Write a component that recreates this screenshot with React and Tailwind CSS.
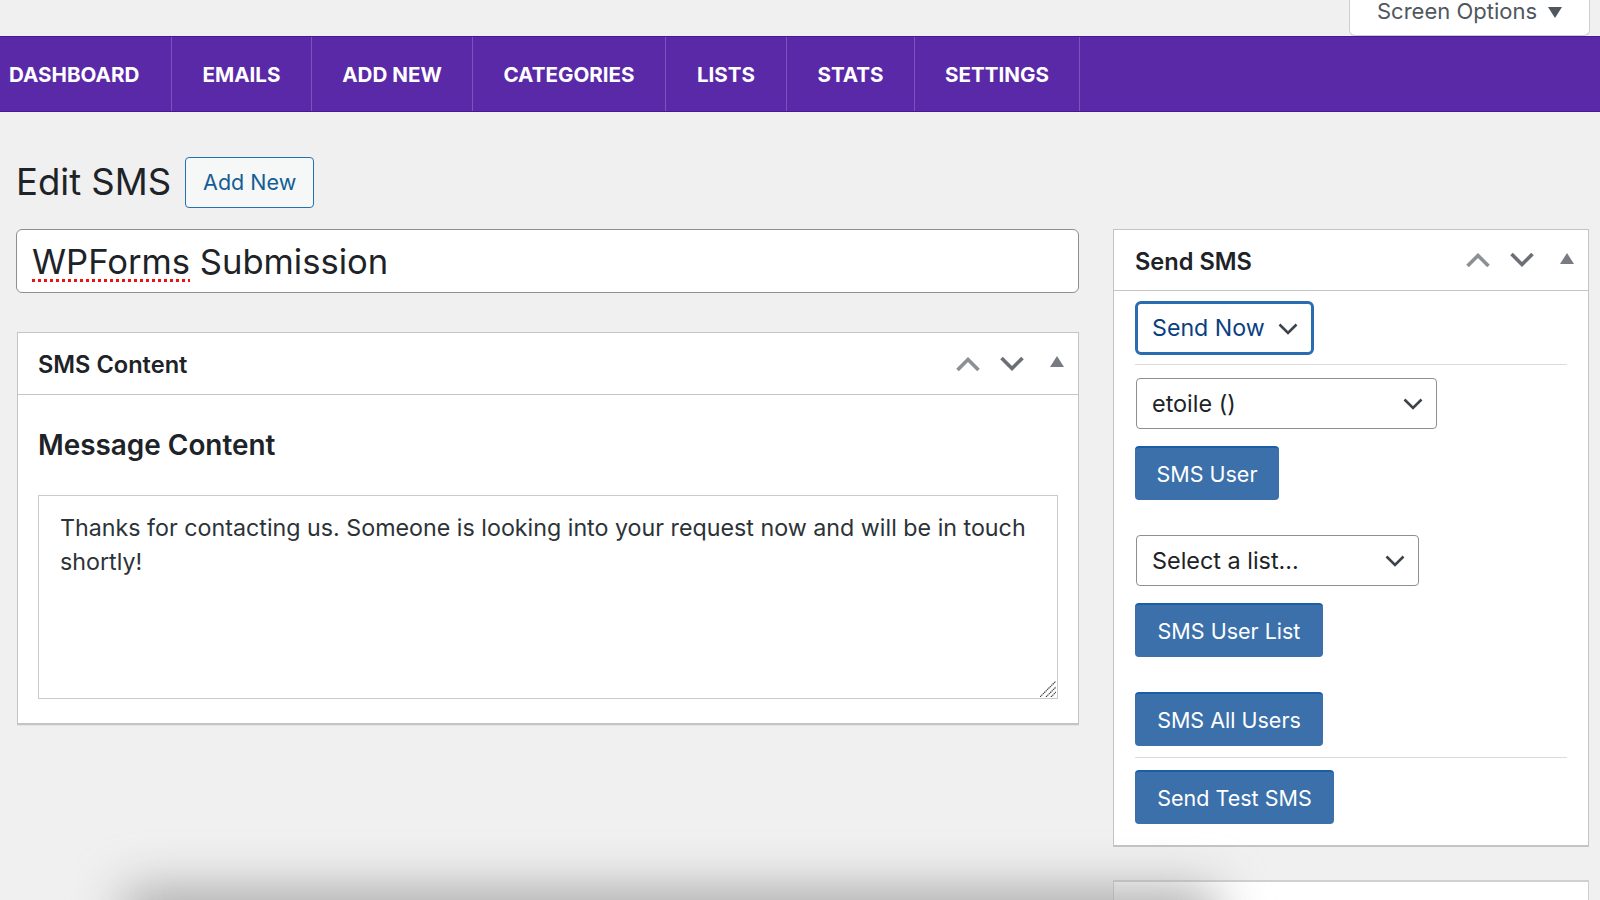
const font = { fontFamily: '"Inter", "Liberation Sans", sans-serif' };

const navItems = [
  ["DASHBOARD", "w-[172px] pl-[9px]"],
  ["EMAILS", "w-[140px] justify-center"],
  ["ADD NEW", "w-[161px] justify-center"],
  ["CATEGORIES", "w-[193px] justify-center"],
  ["LISTS", "w-[121px] justify-center"],
  ["STATS", "w-[128px] justify-center"],
  ["SETTINGS", "w-[165px] justify-center"],
];

function Chevron({ up = false, className = "" }) {
  return (
    <svg viewBox="0 0 24 14" className={className} fill="none" stroke="currentColor" strokeWidth="3.6">
      <path d={up ? "M1.5 13 12 2.5 22.5 13" : "M1.5 1 12 11.5 22.5 1"} />
    </svg>
  );
}

function Triangle({ className = "" }) {
  return (
    <svg viewBox="0 0 14 11" className={className} fill="currentColor">
      <path d="M7 0 14 11H0z" />
    </svg>
  );
}

function PanelControls() {
  return (
    <div className="flex items-center">
      <Chevron up className="w-[24px] h-[14px] text-[#8c8f94]" />
      <Chevron className="w-[24px] h-[14px] ml-[20px] text-[#6c7075]" />
      <Triangle className="w-[14px] h-[11px] ml-[26px] mb-[4px] text-[#787c82]" />
    </div>
  );
}

function SmallChevron() {
  return (
    <svg viewBox="0 0 20 12" className="w-[20px] h-[12px]" fill="none" stroke="#3c434a" strokeWidth="2.6">
      <path d="M1.5 1.5 10 10l8.5-8.5" />
    </svg>
  );
}

function BlueButton({ children, className = "" }) {
  return (
    <div className={`h-[54px] flex items-center justify-center whitespace-nowrap bg-[#3b70ab] border-t-2 border-[#1a5fa5] rounded-[4px] text-white text-[21.5px] ${className}`}>
      {children}
    </div>
  );
}

export default function App() {
  return (
    <div style={font} className="relative w-[1600px] h-[900px] overflow-hidden bg-[#f0f0f1] text-[#1d2327]">
      <div className="h-[36px] flex justify-end pr-[10px]">
        <div className="w-[241px] h-[36px] bg-white border border-t-0 border-[#cfcfd2] rounded-b-[6px] flex items-end pl-[27px] pb-[11px] text-[#50575e] text-[22px] leading-[26px]">
          <span>Screen Options</span>
          <Triangle className="w-[14px] h-[11px] rotate-180 ml-[11px] mb-[6px] text-[#50575e]" />
        </div>
      </div>

      <div className="h-[76px] flex bg-[#5a29a8] border-y border-[#47189c]">
        {navItems.map(([label, cls]) => (
          <div key={label} className={`h-full flex items-center pt-[2px] border-r border-[#7a53bb] text-white text-[20.6px] font-bold ${cls}`}>
            {label}
          </div>
        ))}
      </div>

      <div className="flex items-center pl-[16px] mt-[44px] h-[52px]">
        <h1 className="text-[36.5px] leading-none">Edit SMS</h1>
        <div className="ml-[14px] w-[129px] h-[51px] flex items-center justify-center bg-[#f6f7f7] border border-[#2271b1] rounded-[4px] text-[#135e96] text-[21.5px]">
          Add New
        </div>
      </div>

      <div className="flex mt-[21px] pl-[16px]">
        <div className="w-[1063px]">
          <div className="h-[64px] flex items-center pl-[15px] pt-[2px] bg-white border border-[#8c8f94] rounded-[6px] text-[34.6px]">
            <span><span className="underline decoration-dotted decoration-[#f01010] decoration-[3px] underline-offset-[5px]">WPForms</span> Submission</span>
          </div>

          <div className="mt-[39px] ml-px h-[393px] bg-white border border-[#c3c4c7] border-b-2 shadow-[0_1px_1px_rgba(0,0,0,0.04)]">
            <div className="h-[62px] flex items-center justify-between pl-[20px] pr-[14px] border-b border-[#c3c4c7]">
              <div className="pt-[2px] text-[23.6px] font-semibold">SMS Content</div>
              <PanelControls />
            </div>
            <div className="px-[20px] pt-[32px]">
              <h2 className="text-[27.9px] leading-[36px] font-semibold">Message Content</h2>
              <div className="relative mt-[32px] h-[204px] border border-[#c9cacc] px-[21px] pt-[15px] text-[23.25px] leading-[34px] text-[#2c3338]">
                Thanks for contacting us. Someone is looking into your request now and will be in touch shortly!
                <svg viewBox="0 0 16 16" className="absolute right-[1px] bottom-[1px] w-[16px] h-[16px]" stroke="#444" strokeWidth="1.2" strokeDasharray="1.4 0.6">
                  <path d="M0 16 16 0M6 16 16 6M11 16l5-5" />
                </svg>
              </div>
            </div>
          </div>
        </div>

        <div className="ml-[34px] w-[476px]">
          <div className="h-[618px] bg-white border border-[#c3c4c7] border-b-2">
            <div className="h-[61px] flex items-center justify-between pl-[21px] pr-[14px] border-b border-[#c3c4c7]">
              <div className="pt-[3px] text-[23.6px] font-semibold">Send SMS</div>
              <PanelControls />
            </div>
            <div className="px-[21px] pt-[10px]">
              <div className="w-[179px] h-[54px] flex items-center justify-between pl-[14px] pr-[13px] pt-px border-[3px] border-[#2a6cb0] rounded-[6px] text-[#0a3f80] text-[23.2px]">
                <span>Send Now</span>
                <SmallChevron />
              </div>
              <div className="mt-[9px] h-px bg-[#dcdcde]" />
              <div className="mt-[13px] ml-px w-[301px] h-[51px] flex items-center justify-between pl-[15px] pr-[13px] pt-px border border-[#8c8f94] rounded-[4px] text-[23.4px]">
                <span>etoile ()</span>
                <SmallChevron />
              </div>
              <BlueButton className="mt-[17px] w-[144px]">SMS User</BlueButton>
              <div className="mt-[35px] ml-px w-[283px] h-[51px] flex items-center justify-between pl-[15px] pr-[13px] border border-[#8c8f94] rounded-[4px] text-[23.4px]">
                <span>Select a list...</span>
                <SmallChevron />
              </div>
              <BlueButton className="mt-[17px] w-[188px]">SMS User List</BlueButton>
              <BlueButton className="mt-[35px] w-[188px]">SMS All Users</BlueButton>
              <div className="mt-[11px] h-px bg-[#dcdcde]" />
              <BlueButton className="mt-[12px] w-[199px]">Send Test SMS</BlueButton>
            </div>
          </div>
          <div className="mt-[33px] h-[40px] bg-white border-t-2 border-x border-[#d0d0d2]" />
        </div>
      </div>

      <div className="absolute left-[125px] top-[892px] w-[1090px] h-[50px] bg-[#a0a0a0] blur-[26px]" />
    </div>
  );
}
